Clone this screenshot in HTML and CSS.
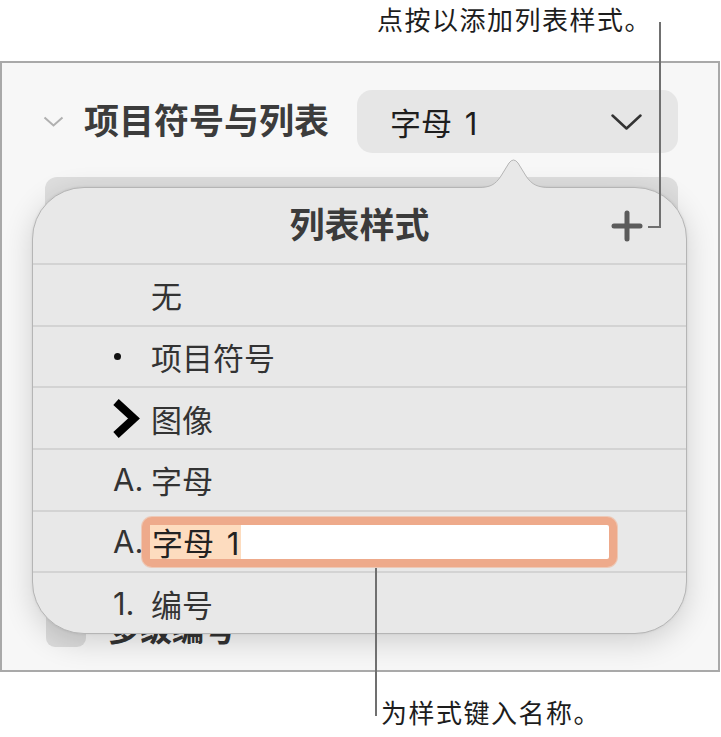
FILE: index.html
```html
<!DOCTYPE html>
<html lang="zh-CN">
<head>
<meta charset="utf-8">
<title>列表样式</title>
<link rel="stylesheet" href="styles.css">
</head>
<body>
<div class="page">
  <div class="note note-top">点按以添加列表样式。</div>

  <section class="panel">
    <div class="panel-head">
      <svg class="disclosure" viewBox="0 0 21 11"><polyline points="1.5,1.5 10.5,9.5 19.5,1.5" /></svg>
      <h2 class="section-title">项目符号与列表</h2>
      <div class="dropdown">
        <span class="dropdown-value">字母 1</span>
        <svg class="dropdown-chevron" viewBox="0 0 31 16"><polyline points="1.5,1.5 15.5,14.5 29.5,1.5" /></svg>
      </div>
    </div>
    <div class="under-box"></div>
    <div class="multi-row">
      <span class="checkbox"></span>
      <span class="multi-label">多级编号</span>
    </div>
  </section>

  <div class="note note-bottom">为样式键入名称。</div>

  <div class="popover">
    <div class="pop-head">
      <span class="pop-title">列表样式</span>
      <svg class="plus" viewBox="0 0 32 32"><line x1="3" y1="16" x2="29" y2="16" /><line x1="16" y1="3" x2="16" y2="29" /></svg>
    </div>
    <ul class="styles">
      <li class="style-row"><span class="marker"></span><span class="label">无</span></li>
      <li class="style-row"><span class="marker"><span class="bullet"></span></span><span class="label">项目符号</span></li>
      <li class="style-row"><span class="marker"><svg class="image-chevron" viewBox="0 0 28 41"><polyline points="4,4 22,20.5 4,37" /></svg></span><span class="label">图像</span></li>
      <li class="style-row"><span class="marker">A.</span><span class="label">字母</span></li>
      <li class="style-row"><span class="marker marker-tight">A.</span><div class="name-field"><span class="selected">字母 1</span></div></li>
      <li class="style-row"><span class="marker">1.</span><span class="label">编号</span></li>
    </ul>
  </div>

  <svg class="pop-arrow" viewBox="0 0 72 32">
    <path class="arrow-fill" d="M0,32 L0,30.5 C12,30.5 17,28 23,19 L31,6 Q35.5,0 40,6 L48,19 C54,28 60,30.5 72,30.5 L72,32 Z" />
    <path class="arrow-stroke" d="M0,30.5 C12,30.5 17,28 23,19 L31,6 Q35.5,0 40,6 L48,19 C54,28 60,30.5 72,30.5" />
  </svg>

  <div class="leader leader-top-v"></div>
  <div class="leader leader-top-h"></div>
  <div class="leader leader-bottom-v"></div>
</div>
</body>
</html>
```

FILE: styles.css
```css
html, body {
  margin: 0;
  background: #ffffff;
}

body {
  font-family: "Inter", "Noto Sans CJK SC", sans-serif;
}

.page {
  position: relative;
  width: 721px;
  height: 737px;
  overflow: hidden;
}

/* annotations */
.note {
  font-family: "Noto Sans CJK SC", sans-serif;
  font-size: 26px;
  line-height: 26px;
  letter-spacing: 1.5px;
  color: #1d1d1d;
  white-space: nowrap;
}

.note-top {
  box-sizing: border-box;
  height: 61px;
  padding: 6px 0 0 377px;
}

.note-bottom {
  padding: 27px 0 0 381px;
}

.leader {
  position: absolute;
  background: #707070;
  z-index: 5;
}

.leader-top-v {
  left: 659px;
  top: 22px;
  width: 2px;
  height: 206px;
}

.leader-top-h {
  left: 648px;
  top: 226px;
  width: 12px;
  height: 2px;
}

.leader-bottom-v {
  left: 375px;
  top: 568px;
  width: 2px;
  height: 148px;
}

/* inspector panel */
.panel {
  box-sizing: border-box;
  width: 720px;
  height: 611px;
  border: 2px solid #a9a9a9;
  background: #f7f7f7;
}

.panel-head {
  display: flex;
  align-items: center;
  height: 63px;
  margin-top: 27px;
  padding: 0 40px 0 41px;
}

.disclosure {
  width: 21px;
  height: 11px;
  margin-right: 20px;
  fill: none;
  stroke: #b0b0b0;
  stroke-width: 2;
}

.section-title {
  margin: 0;
  font-size: 35px;
  line-height: 1;
  font-weight: 700;
  color: #3c3c3c;
}

.dropdown {
  box-sizing: border-box;
  margin-left: auto;
  width: 321px;
  height: 63px;
  border-radius: 15px;
  background: #e6e6e6;
  display: flex;
  align-items: center;
  justify-content: space-between;
  padding: 0 36px 0 33px;
  font-size: 31px;
  color: #1e1e1e;
}

.dropdown-value {
  word-spacing: 4px;
}

.dropdown-chevron {
  width: 31px;
  height: 16px;
  fill: none;
  stroke: #333333;
  stroke-width: 2.5;
  stroke-linecap: round;
  stroke-linejoin: round;
}

.under-box {
  margin: 24px 40px 0 43px;
  height: 400px;
  border-radius: 12px;
  background: #dedede;
}

.multi-row {
  display: flex;
  align-items: center;
  gap: 22px;
  height: 40px;
  margin: 30px 0 0 44px;
}

.checkbox {
  width: 40px;
  height: 40px;
  border-radius: 9px;
  background: #dcdcdc;
}

.multi-label {
  font-size: 32px;
  font-weight: 700;
  color: #333333;
}

/* popover */
.popover {
  position: absolute;
  left: 32px;
  top: 187px;
  width: 655px;
  height: 447px;
  box-sizing: border-box;
  border: 1px solid #b5b5b5;
  border-radius: 52px;
  background: #e8e8e8;
  box-shadow: 0 8px 30px rgba(0, 0, 0, 0.16), 0 0 3px rgba(0, 0, 0, 0.08);
  overflow: hidden;
  display: flex;
  flex-direction: column;
  z-index: 3;
}

.pop-arrow {
  position: absolute;
  left: 478px;
  top: 157px;
  width: 72px;
  height: 32px;
  z-index: 4;
}

.arrow-fill {
  fill: #e8e8e8;
}

.arrow-stroke {
  fill: none;
  stroke: #b5b5b5;
  stroke-width: 1;
}

.pop-head {
  position: relative;
  height: 75px;
  flex: none;
  display: flex;
  align-items: center;
  justify-content: center;
}

.pop-title {
  font-size: 35px;
  font-weight: 700;
  color: #3b3b3b;
  line-height: 1;
}

.plus {
  position: absolute;
  right: 43px;
  top: 22px;
  width: 32px;
  height: 32px;
  stroke: #5b5b5b;
  stroke-width: 5;
  stroke-linecap: round;
}

.styles {
  list-style: none;
  margin: 0;
  padding: 0;
  flex: 1;
  display: flex;
  flex-direction: column;
}

.style-row {
  flex: 1;
  display: flex;
  align-items: center;
  border-top: 2px solid #d3d3d3;
  padding-left: 80px;
  font-size: 31px;
  color: #333333;
}

.marker {
  width: 38px;
  flex: none;
  display: flex;
  align-items: center;
}

.marker-tight {
  width: 29px;
}

.bullet {
  width: 7px;
  height: 7px;
  margin-left: 1px;
  border-radius: 50%;
  background: #111111;
}

.image-chevron {
  width: 28px;
  height: 41px;
  margin-left: -1px;
  fill: none;
  stroke: #000000;
  stroke-width: 8;
  stroke-linejoin: miter;
}

.name-field {
  box-sizing: border-box;
  width: 475px;
  height: 50px;
  border: 8px solid #eeaa8b;
  border-radius: 10px;
  background: #ffffff;
  box-shadow: 0 0 0 1px rgba(240, 180, 150, 0.6);
  display: flex;
  align-items: center;
  color: #222222;
}

.selected {
  height: 100%;
  display: flex;
  align-items: center;
  padding: 0 2px;
  background: #fddcbf;
  font-size: 31px;
  word-spacing: 4px;
}
```
